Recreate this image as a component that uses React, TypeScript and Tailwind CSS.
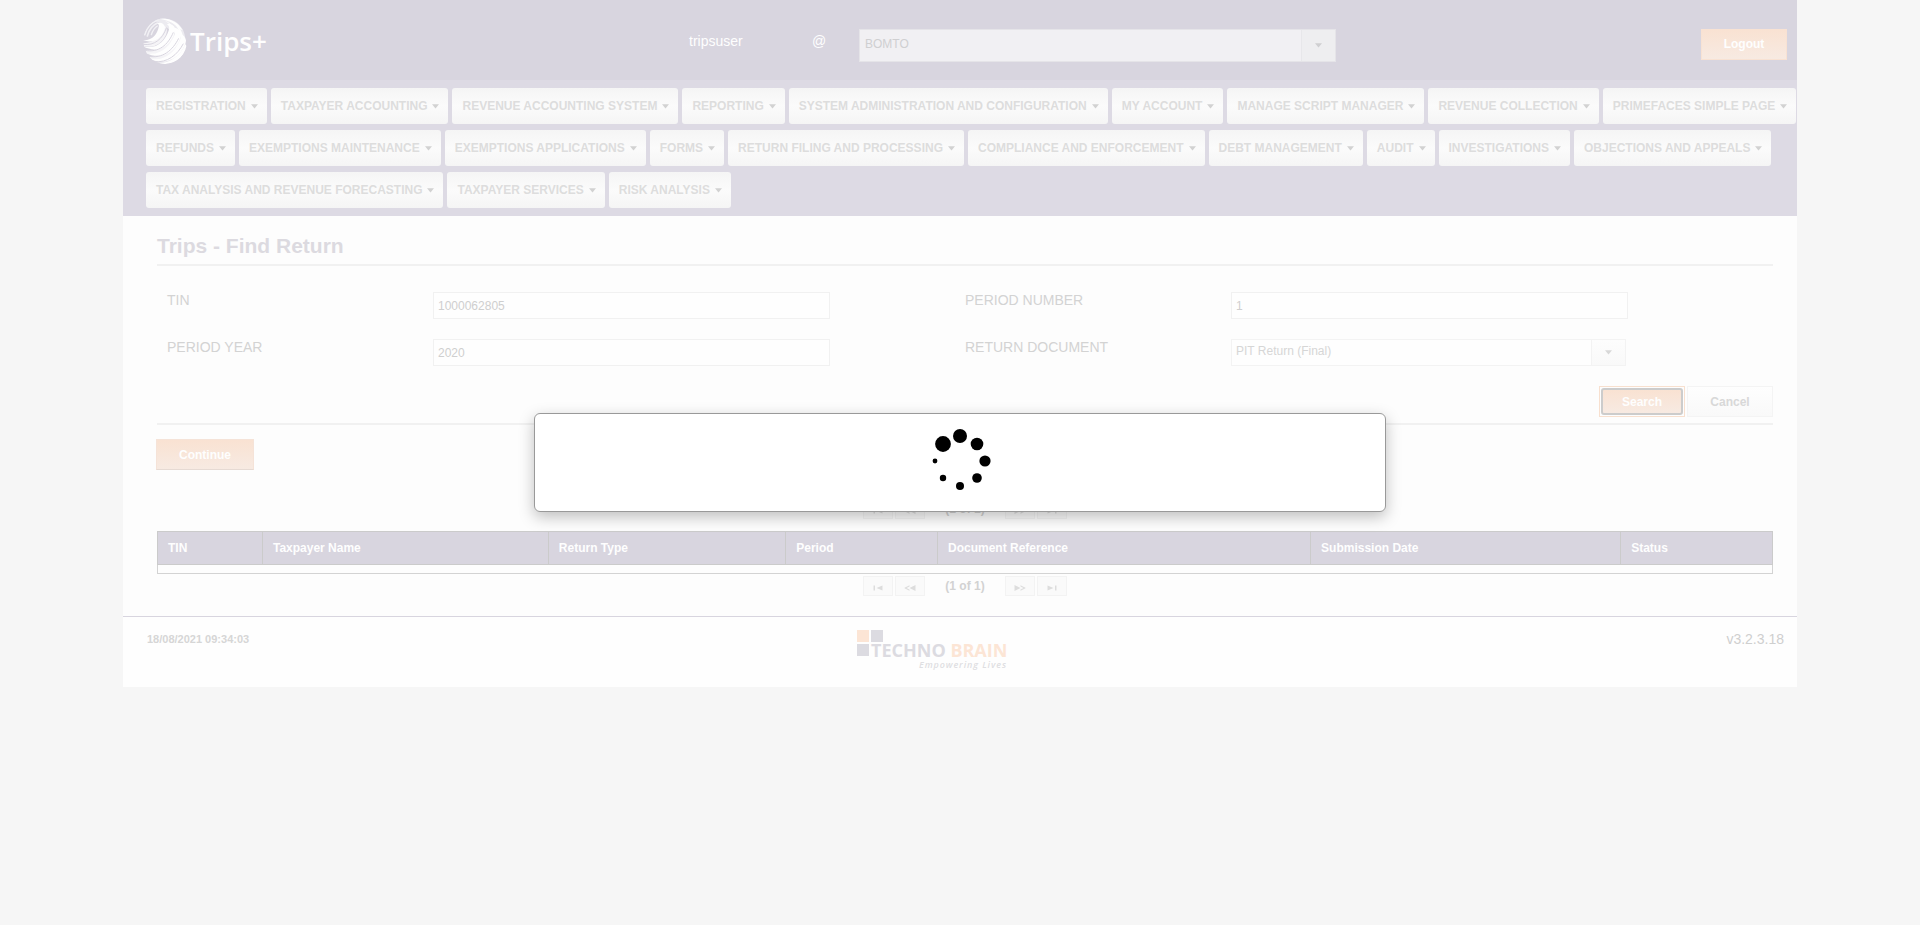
import type { ReactNode } from 'react';

const MENU_ROWS = [
  [
    'REGISTRATION',
    'TAXPAYER ACCOUNTING',
    'REVENUE ACCOUNTING SYSTEM',
    'REPORTING',
    'SYSTEM ADMINISTRATION AND CONFIGURATION',
    'MY ACCOUNT',
    'MANAGE SCRIPT MANAGER',
    'REVENUE COLLECTION',
    'PRIMEFACES SIMPLE PAGE',
  ],
  [
    'REFUNDS',
    'EXEMPTIONS MAINTENANCE',
    'EXEMPTIONS APPLICATIONS',
    'FORMS',
    'RETURN FILING AND PROCESSING',
    'COMPLIANCE AND ENFORCEMENT',
    'DEBT MANAGEMENT',
    'AUDIT',
    'INVESTIGATIONS',
    'OBJECTIONS AND APPEALS',
  ],
  ['TAX ANALYSIS AND REVENUE FORECASTING', 'TAXPAYER SERVICES', 'RISK ANALYSIS'],
];

const COLUMNS = [
  { title: 'TIN', width: 'w-[6.5%]' },
  { title: 'Taxpayer Name', width: 'w-[17.7%]' },
  { title: 'Return Type', width: 'w-[14.7%]' },
  { title: 'Period', width: 'w-[9.4%]' },
  { title: 'Document Reference', width: 'w-[23.1%]' },
  { title: 'Submission Date', width: 'w-[19.2%]' },
  { title: 'Status', width: 'w-[9.4%]' },
];

function Caret({ className }: { className: string }) {
  return (
    <svg className={className} width="7" height="5" viewBox="0 0 7 5" aria-hidden="true">
      <path d="M0 0.3h7L3.500 4.500z" fill="currentColor" />
    </svg>
  );
}

function Globe() {
  return (
    <svg width="44" height="46" viewBox="9 12 132 138" aria-hidden="true">
      <defs>
        <clipPath id="globe">
          <ellipse cx="75" cy="81" rx="66" ry="69" />
        </clipPath>
      </defs>
      <g clipPath="url(#globe)">
        <path
          d="M40 20C70 5 115 15 130 50c12 30 8 60-8 82-20 20-50 18-80 12 35-5 60-30 66-60-8-30-30-55-68-64z"
          fill="#ecebf0"
        />
        <g fill="none" stroke="#f1f0f4" strokeLinecap="round">
          <path d="M14 62C20 42 32 26 54 18" strokeWidth="5" />
          <path d="M22 66C27 48 36 34 52 27" strokeWidth="5" />
          <path d="M34 62c4-12 9-20 18-26" strokeWidth="4" />
        </g>
        <g fill="#f5f4f7">
          <path d="M10 88C45 88 66 62 74 34c8 8 8 18 4 28C66 88 42 104 12 96z" />
          <path d="M16 108c38 6 68-20 80-58 8 8 8 20 2 32-16 30-46 44-78 36z" />
          <path d="M28 128c40 4 72-22 86-58 8 10 6 24-2 36-18 28-48 38-78 32z" />
        </g>
        <g fill="#fefefe">
          <path d="M9 79C40 80 52 58 56 40c2-6 0-10-5-13 14-3 23 4 24 12C72 66 46 92 9 79z" />
          <path d="M9 97c40 10 66-14 78-50 2-8-1-13-7-17 14-2 24 6 26 15-8 46-48 78-97 52z" />
          <path d="M17 116c42 12 72-16 88-56 3-9 0-14-6-18 14-2 22 6 25 17-8 50-58 84-107 57z" />
          <path d="M30 134c42 10 74-18 90-56 3-9 1-14-4-18 12 0 20 8 22 20-10 48-60 78-108 54z" />
          <path d="M50 147c38 4 70-20 86-56l6 8c-12 36-50 60-92 48z" />
          <path d="M56 14c30-4 56 8 72 34l-8-2C104 26 82 18 56 14z" />
          <path d="M74 20c22 8 34 22 38 44l-6-2c-4-18-14-32-32-42z" />
          <path d="M96 24c20 10 30 26 34 48l-6-2c-4-18-12-34-28-46z" />
        </g>
        <g fill="none" stroke="#d8d5df" strokeWidth="3">
          <path d="M9 91C44 96 68 74 79 42" />
          <path d="M14 109c42 8 70-16 86-54" />
          <path d="M24 127c44 8 74-18 92-54" />
          <path d="M42 143c40 4 70-20 88-54" />
        </g>
      </g>
    </svg>
  );
}

function PageButton({ label, children }: { label: string; children: ReactNode }) {
  return (
    <button
      type="button"
      aria-label={label}
      className="flex h-5 w-[30px] items-center justify-center border border-[#f3f3f3] bg-[#fafafa] pt-1 text-[#dddddd]"
    >
      <svg width="12" height="6" viewBox="0 0 12 6" aria-hidden="true" fill="currentColor">
        {children}
      </svg>
    </button>
  );
}

function Paginator() {
  return (
    <div className="flex h-5 items-center justify-center gap-[2px]">
      <PageButton label="First page">
        <path d="M1.500 0.500H3v5H1.500zM10.500 0.500v5L4.500 3z" />
      </PageButton>
      <PageButton label="Previous page">
        <path d="M11.500 0v6l-6-3zM5.500 0.300v1.200L2.500 3l3 1.500v1.200L0.500 3.300v-.6z" />
      </PageButton>
      <span className="px-[18px] pb-px text-xs leading-5 font-bold text-[#d2d2d2]">(1 of 1)</span>
      <PageButton label="Next page">
        <path d="M0.500 0v6l6-3zM6.500 0.300v1.200L9.500 3l-3 1.500v1.200L11.500 3.300v-.6z" />
      </PageButton>
      <PageButton label="Last page">
        <path d="M10.500 0.500H9v5h1.500zM1.500 0.500v5l6-2.500z" />
      </PageButton>
    </div>
  );
}

function TextField({ id, label, value }: { id: string; label: string; value: string }) {
  return (
    <>
      <label htmlFor={id} className="px-[10px] text-sm leading-5 text-[#d3d3d3]">
        {label}
      </label>
      <div className="px-[10px] pt-[2px]">
        <input
          id={id}
          type="text"
          defaultValue={value}
          className="block h-[27px] w-full max-w-[397px] border border-[#f1f1f1] bg-[#fefefe] px-1 text-xs text-[#cfcfcf] outline-none"
        />
      </div>
    </>
  );
}

function CompanyLogo() {
  return (
    <svg width="154" height="42" viewBox="0 0 154 42" role="img" aria-label="Techno Brain">
      <rect x="0" y="0" width="12" height="12" fill="#fce5d5" />
      <rect x="14" y="0" width="12" height="12" fill="#dcdbe1" />
      <rect x="0" y="14" width="12" height="12" fill="#dcdbe1" />
      <text x="14" y="27" fontFamily="'Open Sans', sans-serif" fontSize="18" fontWeight="700" fill="#dcdbe1">
        TECHNO <tspan fill="#fce5d5">BRAIN</tspan>
      </text>
      <text
        x="62"
        y="38"
        className="tracking-widest"
        fontFamily="'Open Sans', sans-serif"
        fontSize="9"
        fontStyle="italic"
        fontWeight="600"
        fill="#dfdfe2"
      >
        Empowering Lives
      </text>
    </svg>
  );
}

const SPINNER_DOTS = [
  { cx: 32, cy: 7, r: 7 },
  { cx: 49, cy: 15, r: 6.3 },
  { cx: 57, cy: 32, r: 5.6 },
  { cx: 49, cy: 49, r: 4.8 },
  { cx: 32, cy: 57, r: 4 },
  { cx: 15, cy: 49, r: 3.2 },
  { cx: 7, cy: 32, r: 2.4 },
  { cx: 15, cy: 15, r: 7.9 },
];

export default function App() {
  return (
    <div className="min-h-screen bg-[#f6f6f6] font-['Liberation_Sans',Arial,sans-serif]">
      <div className="mx-auto max-w-[1674px] bg-[#fdfdfd]">
        <header className="grid h-20 grid-cols-[566fr_123fr_47fr_477fr_461fr] items-center bg-[#d8d5df] pt-[2px]">
          <a href="#home" className="flex items-center gap-[3px] pl-5 text-[#fefefe]">
            <Globe />
            <span className="font-['Open_Sans',sans-serif] text-[26px] leading-8 font-semibold">Trips+</span>
          </a>
          <span className="text-sm leading-5 text-[#fefefe]">tripsuser</span>
          <label htmlFor="office" className="text-sm leading-5 text-[#fefefe]">
            @
          </label>
          <div className="relative mt-2">
            <select
              id="office"
              className="block h-[33px] w-full appearance-none border border-[#e5e4e8] bg-[#f1f0f3] px-[5px] pb-[2px] text-xs text-[#cfcfd1] outline-none"
            >
              <option>BOMTO</option>
            </select>
            <span className="pointer-events-none absolute inset-y-px right-px flex w-[34px] items-center justify-center border-l border-[#e7e7ea] bg-[#eeeef0] text-[#cfcfd1]">
              <Caret className="" />
            </span>
          </div>
          <div className="mt-[6px] flex justify-end pr-[10px]">
            <button
              type="button"
              className="h-[31px] w-[86px] border border-[#f8e2d3] bg-linear-to-b from-[#f9e2d2] to-[#f7eae2] text-xs font-bold text-[#fefefe]"
            >
              Logout
            </button>
          </div>
        </header>

        <nav className="flex flex-col gap-[6px] bg-[#dddae4] py-2 pl-[23px]">
          {MENU_ROWS.map((row) => (
            <div key={row[0]} className="flex gap-1">
              {row.map((item) => (
                <button
                  key={item}
                  type="button"
                  className="flex h-9 items-center gap-[5px] rounded-[3px] bg-linear-to-b from-[#f5f5f5] via-[#fbfbfb] to-[#f5f5f5] pr-[9px] pl-[10px] text-xs font-bold whitespace-nowrap text-[#dddddd]"
                >
                  {item}
                  <Caret className="shrink-0 text-[#d2d2d2]" />
                </button>
              ))}
            </div>
          ))}
        </nav>

        <main className="pr-6 pl-[34px]">
          <h1 className="border-b-2 border-[#f1f1f1] pt-4 pb-1 text-[21px] leading-7 font-bold text-[#dcdae0]">
            Trips - Find Return
          </h1>

          <form onSubmit={(event) => event.preventDefault()}>
            <div className="grid grid-cols-[1fr_2fr_1fr_2fr] gap-y-[18px] pt-6 pr-5">
              <TextField id="tin" label="TIN" value="1000062805" />
              <TextField id="period-number" label="PERIOD NUMBER" value="1" />
              <TextField id="period-year" label="PERIOD YEAR" value="2020" />
              <label htmlFor="return-document" className="px-[10px] text-sm leading-5 text-[#d3d3d3]">
                RETURN DOCUMENT
              </label>
              <div className="px-[10px] pt-[2px]">
                <div className="relative max-w-[395px]">
                  <select
                    id="return-document"
                    className="block h-[27px] w-full appearance-none border border-[#f3f3f3] bg-[#fefefe] px-1 pb-1 text-xs text-[#d6d6d6] outline-none"
                  >
                    <option>PIT Return (Final)</option>
                  </select>
                  <span className="pointer-events-none absolute inset-y-px right-px flex w-[34px] items-center justify-center border-l border-[#f3f3f3] bg-linear-to-b from-[#fdfdfd] to-[#f9f9f9] text-[#d8d8d8]">
                    <Caret className="" />
                  </span>
                </div>
              </div>
            </div>

            <div className="mt-5 flex justify-end gap-[2px] border-b-2 border-[#f1f1f1] pb-[6px]">
              <button
                type="submit"
                className="h-[31px] w-[86px] border border-[#f8e0cf] p-px text-xs font-bold text-[#fefefe]"
              >
                <span className="flex h-full items-center justify-center rounded-[3px] border-2 border-[#cccccc] bg-linear-to-b from-[#f9e2d2] to-[#f7eae2]">
                  Search
                </span>
              </button>
              <button
                type="button"
                className="h-[31px] w-[86px] border border-[#f4f4f4] bg-linear-to-b from-[#fefefe] to-[#f9f9f9] text-xs font-bold text-[#d8d8d8]"
              >
                Cancel
              </button>
            </div>
          </form>

          <button
            type="button"
            className="mt-[14px] -ml-px block h-[31px] w-[98px] border border-[#f5e3d8] border-b-[#e6dad3] bg-linear-to-b from-[#f9e2d2] to-[#f7eae2] text-xs font-bold text-[#fefefe]"
          >
            Continue
          </button>

          <div className="pt-[29px]">
            <Paginator />
            <table className="mt-3 mb-[2px] w-full table-fixed border-collapse border border-[#d3d3d3]">
              <thead>
                <tr>
                  {COLUMNS.map((column) => (
                    <th
                      key={column.title}
                      scope="col"
                      className={`${column.width} h-[33px] border border-[#cbcbcb] bg-[#d8d5df] px-[10px] text-left text-xs font-bold text-[#fefefe]`}
                    >
                      {column.title}
                    </th>
                  ))}
                </tr>
              </thead>
              <tbody>
                <tr>
                  <td colSpan={7} className="h-[9px]" />
                </tr>
              </tbody>
            </table>
            <Paginator />
          </div>
        </main>

        <footer className="mt-5 grid h-[71px] grid-cols-[1fr_auto_1fr] items-start border-t border-[#d8d5df] bg-[#fefefe] pt-3 pr-[13px] pl-6">
          <time className="text-[11px] leading-5 font-bold text-[#d6d6d6]">18/08/2021 09:34:03</time>
          <div className="mr-16 pt-px">
            <CompanyLogo />
          </div>
          <span className="text-right text-sm leading-5 text-[#cfcfcf]">v3.2.3.18</span>
        </footer>
      </div>

      <div className="fixed inset-0 flex items-center justify-center">
        <div
          role="dialog"
          aria-label="Loading"
          className="flex h-[99px] w-[852px] justify-center rounded-md border border-[#999999] bg-white pt-[15px] shadow-[0_5px_15px_rgba(0,0,0,0.25)]"
        >
          <svg width="64" height="64" viewBox="0 0 64 64" aria-hidden="true">
            {SPINNER_DOTS.map((dot) => (
              <circle key={`${dot.cx}-${dot.cy}`} cx={dot.cx} cy={dot.cy} r={dot.r} fill="#000000" />
            ))}
          </svg>
        </div>
      </div>
    </div>
  );
}
